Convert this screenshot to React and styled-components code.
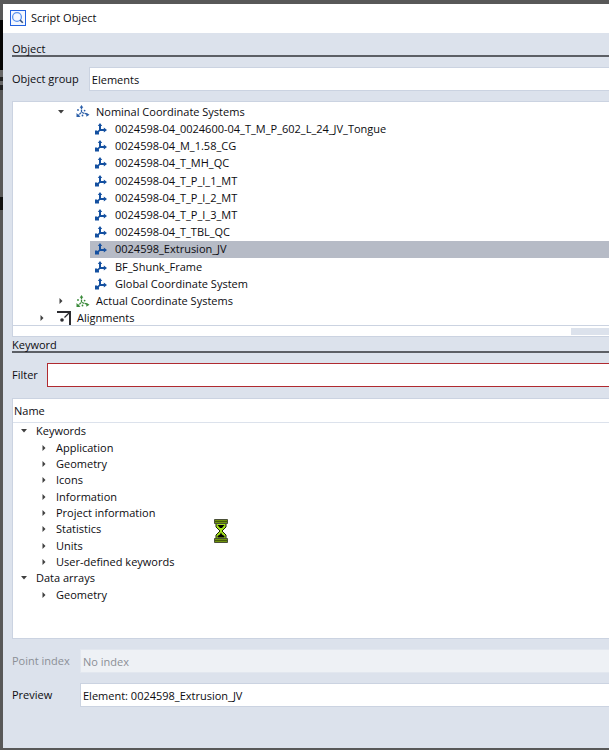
import styled, { createGlobalStyle } from 'styled-components';

const objectTree = [
  { label: 'Nominal Coordinate Systems', level: 1, open: true, icon: 'nominal' },
  { label: '0024598-04_0024600-04_T_M_P_602_L_24_JV_Tongue', level: 2, icon: 'axes' },
  { label: '0024598-04_M_1.58_CG', level: 2, icon: 'axes' },
  { label: '0024598-04_T_MH_QC', level: 2, icon: 'axes' },
  { label: '0024598-04_T_P_I_1_MT', level: 2, icon: 'axes' },
  { label: '0024598-04_T_P_I_2_MT', level: 2, icon: 'axes' },
  { label: '0024598-04_T_P_I_3_MT', level: 2, icon: 'axes' },
  { label: '0024598-04_T_TBL_QC', level: 2, icon: 'axes' },
  { label: '0024598_Extrusion_JV', level: 2, icon: 'axes', selected: true },
  { label: 'BF_Shunk_Frame', level: 2, icon: 'axes' },
  { label: 'Global Coordinate System', level: 2, icon: 'axes' },
  { label: 'Actual Coordinate Systems', level: 1, open: false, icon: 'actual' },
  { label: 'Alignments', level: 0, open: false, icon: 'alignment' },
];

const keywordTree = [
  { label: 'Keywords', level: 0, open: true },
  { label: 'Application', level: 1, open: false },
  { label: 'Geometry', level: 1, open: false },
  { label: 'Icons', level: 1, open: false },
  { label: 'Information', level: 1, open: false },
  { label: 'Project information', level: 1, open: false },
  { label: 'Statistics', level: 1, open: false },
  { label: 'Units', level: 1, open: false },
  { label: 'User-defined keywords', level: 1, open: false },
  { label: 'Data arrays', level: 0, open: true },
  { label: 'Geometry', level: 1, open: false },
];

const SearchIcon = () => (
  <svg width="16" height="16" viewBox="0 0 16 16" fill="none" aria-hidden="true">
    <rect x="0.5" y="0.5" width="15" height="15" fill="#f3f7ff" stroke="#2161e0" />
    <circle cx="7" cy="7" r="4.4" stroke="#5a92ee" strokeWidth="1.3" />
    <path d="M10 10 L12.8 12.8" stroke="#33507e" strokeWidth="1.6" />
  </svg>
);

const Arrow = ({ open }) => (
  <svg width="8" height="8" viewBox="0 0 8 8" fill="#404040" aria-hidden="true">
    {open ? <path d="M1 2 H7 L4 5.5 Z" /> : <path d="M2.5 1 V7 L5.5 4 Z" />}
  </svg>
);

const AxesIcon = () => (
  <svg width="12" height="12" viewBox="0 0 12 12" fill="#1450a0" aria-hidden="true">
    <path d="M4 2 H6 V6 H9 V8 H5 L3 10 L1.5 9 L4 6.8 Z" />
    <path d="M5 0 L7.2 3 H2.8 Z M12 7 L8.8 9.6 V4.4 Z M0 7.5 V11.5 H4 V9.5 L2 7.5 Z" />
  </svg>
);

const GroupIcon = ({ color }) => (
  <svg width="14" height="13" viewBox="0 0 14 13" fill={color} aria-hidden="true">
    <path d="M5.5 2 V7 L2 11 M6 7.5 L12 9.5" fill="none" stroke={color} strokeWidth="1.3" strokeDasharray="2.4 0.5" />
    <path d="M5.5 0 L7.3 2.8 H3.7 Z M0.5 8 V12 H4.5 Z M13.5 9.8 L10.3 11.8 V7.8 Z" />
    <circle cx="8.6" cy="5.6" r="0.9" />
    <circle cx="2" cy="5" r="0.9" />
    <circle cx="6.5" cy="10.5" r="0.9" />
  </svg>
);

const AlignmentIcon = () => (
  <svg width="14" height="14" viewBox="0 0 14 14" fill="none" aria-hidden="true">
    <path d="M0 1 H13 V14" stroke="#2c2c30" strokeWidth="2" />
    <path d="M7.5 6.5 L12 2" stroke="#2c2c30" strokeWidth="1.2" />
    <circle cx="5" cy="9" r="1.8" fill="#2c2c30" />
  </svg>
);

const icons = {
  axes: <AxesIcon />,
  nominal: <GroupIcon color="#2a5ea8" />,
  actual: <GroupIcon color="#3a8a3a" />,
  alignment: <AlignmentIcon />,
};

const Hourglass = () => (
  <svg width="14" height="24" viewBox="0 0 14 24" aria-hidden="true">
    <path d="M2 4 H12 V8 L8 12 L12 16 V20 H2 V16 L6 12 L2 8 Z" fill="#a4e01c" stroke="#1a2400" />
    <path d="M3.5 6 H10.5 L8 9 H6 Z M7 13.5 L8 15.5 L10.5 17 V18.5 H3.5 V17 L6 15.5 Z" fill="#000" />
    <path d="M0.5 0.5 H13.5 V4.5 H0.5 Z M0.5 19.5 H13.5 V23.5 H0.5 Z" fill="#6f930c" stroke="#4a5038" />
    <path d="M1 2.5 H13 M1 21.5 H13" stroke="#42590a" />
  </svg>
);

const App = () => {
  return (
    <Desktop>
      <GlobalStyle />
      <Dialog>
        <TitleBar>
          <SearchIcon />
          <h1>Script Object</h1>
        </TitleBar>
        <Content>
          <SectionTitle>Object</SectionTitle>
          <Field $gap={10}>
            <label htmlFor="group">Object group</label>
            <TextBox id="group" defaultValue="Elements" />
          </Field>
          <ObjectPanel>
            <ObjectView>
              <ObjectTree role="tree" aria-label="Objects">
                {objectTree.map((item) => (
                  <ObjectRow key={item.label} role="treeitem" aria-selected={!!item.selected} $level={item.level}>
                    <ArrowSlot>{item.level < 2 && <Arrow open={item.open} />}</ArrowSlot>
                    <ObjectLabel $selected={item.selected}>
                      <IconSlot>{icons[item.icon]}</IconSlot>
                      {item.label}
                    </ObjectLabel>
                  </ObjectRow>
                ))}
              </ObjectTree>
            </ObjectView>
            <ScrollTrack>
              <ScrollThumb />
            </ScrollTrack>
          </ObjectPanel>
          <SectionTitle>Keyword</SectionTitle>
          <Field $gap={9}>
            <label htmlFor="filter">Filter</label>
            <TextBox id="filter" $invalid />
          </Field>
          <KeywordPanel>
            <ColumnHeader>Name</ColumnHeader>
            <KeywordTree role="tree" aria-label="Keywords">
              {keywordTree.map((item, index) => (
                <KeywordRow key={index} role="treeitem" $level={item.level}>
                  <ArrowSlot>
                    <Arrow open={item.open} />
                  </ArrowSlot>
                  {item.label}
                </KeywordRow>
              ))}
            </KeywordTree>
            <BusyCursor>
              <Hourglass />
            </BusyCursor>
          </KeywordPanel>
          <Field $label={68} $disabled>
            <label htmlFor="point">Point index</label>
            <TextBox id="point" defaultValue="No index" disabled />
          </Field>
          <Field $label={68}>
            <label htmlFor="preview">Preview</label>
            <TextBox id="preview" defaultValue="Element: 0024598_Extrusion_JV" readOnly />
          </Field>
        </Content>
      </Dialog>
    </Desktop>
  );
};

export default App;

const GlobalStyle = createGlobalStyle`
  * {
    box-sizing: border-box;
  }

  body {
    margin: 0;
    background: #585858;
    color: #0c0c10;
    font: 11px/16px "Open Sans", "Noto Sans", sans-serif;
  }
`;

// the application behind the dialog shows through along the left edge
const Desktop = styled.div`
  min-height: 100vh;
  display: flex;
  padding: 4px 0 2px 3px;
  background: linear-gradient(
    #585858 20px,
    #050505 20px 70px,
    #666 70px 77px,
    #222 77px 81px,
    #666 81px 85px,
    #222 85px 90px,
    #585858 90px 197px,
    #111 197px 210px,
    #585858 210px
  );
`;

const Dialog = styled.main`
  flex: 1;
  min-width: 0;
  background: #dce2ec;
`;

const TitleBar = styled.header`
  height: 29px;
  display: flex;
  align-items: center;
  gap: 5px;
  padding: 0 7px 2px;
  background: #fff;

  h1 {
    margin: 0;
    font-size: 11px;
    font-weight: 400;
  }
`;

const Content = styled.div`
  padding: 8px 0 0 9px;
`;

const SectionTitle = styled.h2`
  height: 16px;
  margin: 0;
  border-bottom: 2px solid #5c5f65;
  font-size: 11px;
  line-height: 16px;
  font-weight: 400;
`;

const Field = styled.div`
  display: flex;
  align-items: center;
  gap: ${({ $gap }) => $gap || 0}px;
  margin-top: 10px;
  color: ${({ $disabled }) => ($disabled ? '#8b8f96' : 'inherit')};

  label {
    flex: none;
    width: ${({ $label }) => ($label ? `${$label}px` : 'auto')};
  }
`;

const TextBox = styled.input`
  flex: 1;
  min-width: 0;
  height: 24px;
  padding: 0 2px;
  border: 1px solid ${({ $invalid }) => ($invalid ? '#b02a30' : '#cbd3e1')};
  border-right: 0;
  border-radius: 0;
  background: #fff;
  color: inherit;
  font: inherit;
  outline: none;

  &:disabled {
    background: #eef1f5;
    border-color: #e2e7ef;
  }
`;

const ObjectPanel = styled.section`
  margin-top: 10px;
  border: solid #cbd3e1;
  border-width: 1px 0 1px 1px;
  background: #fff;
`;

const ObjectView = styled.div`
  height: 224px;
  border-bottom: 1px solid #cbd3e1;
  overflow: hidden;
`;

const ObjectTree = styled.div`
  height: 225px;
  display: grid;
  grid-auto-rows: 1fr;
  padding-top: 1px;
`;

const ObjectRow = styled.div`
  min-height: 0;
  display: flex;
  padding-left: ${({ $level }) => 23 + $level * 19}px;
  white-space: nowrap;
`;

const ArrowSlot = styled.span`
  width: 16px;
  flex: none;
  display: flex;
  align-items: center;
  padding-left: 2px;
`;

const ObjectLabel = styled.span`
  flex: 1;
  display: flex;
  align-items: center;
  background: ${({ $selected }) => ($selected ? '#b6bbc6' : 'transparent')};
`;

const IconSlot = styled.span`
  width: 25px;
  flex: none;
  display: flex;
  padding-left: 5px;
`;

const ScrollTrack = styled.div`
  height: 10px;
  display: flex;
  justify-content: flex-end;
  padding: 2px 0 1px;
`;

const ScrollThumb = styled.div`
  width: 38px;
  background: #dce2ec;
`;

const KeywordPanel = styled.section`
  position: relative;
  height: 241px;
  margin-top: 11px;
  border: solid #cbd3e1;
  border-width: 1px 0 1px 1px;
  background: #fff;
`;

const ColumnHeader = styled.div`
  height: 24px;
  padding: 4px 1px;
  border-bottom: 1px solid #dce2ec;
`;

const KeywordTree = styled.div`
  height: 180px;
  display: grid;
  grid-auto-rows: 1fr;
`;

const KeywordRow = styled.div`
  min-height: 0;
  display: flex;
  align-items: center;
  gap: 2px;
  padding-left: ${({ $level }) => 5 + $level * 20}px;
`;

// wait cursor hovering over the keyword list
const BusyCursor = styled.div`
  position: absolute;
  top: 120px;
  left: 201px;
`;
